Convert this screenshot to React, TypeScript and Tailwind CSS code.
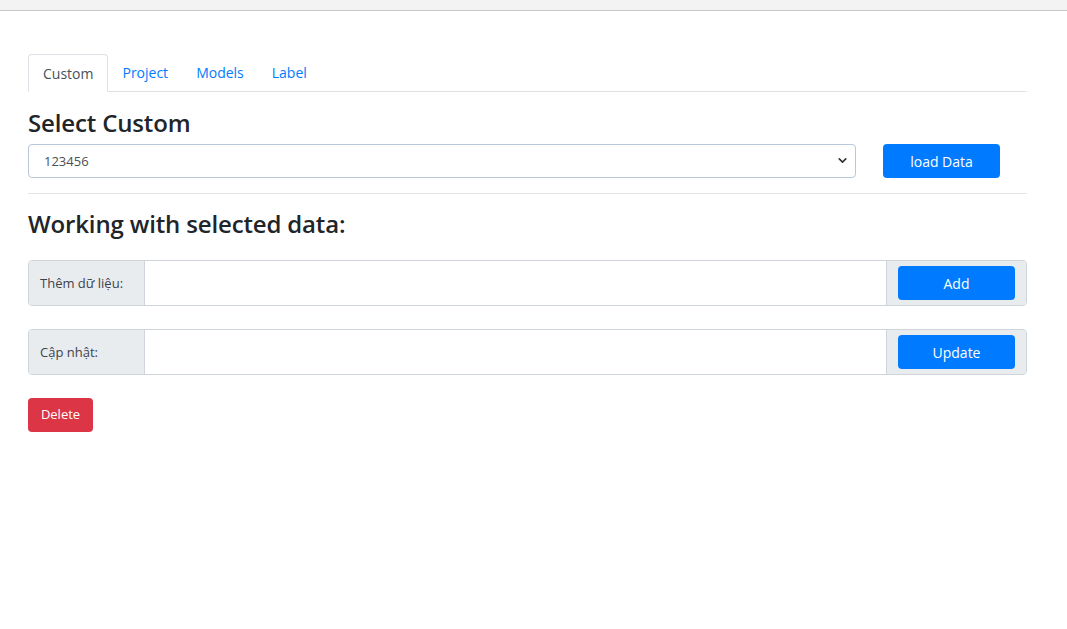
import { ChevronDown } from "lucide-react";

export default function App() {
    return (
        <div className="min-h-[629px] bg-white text-[#212529] [font-family:'Open_Sans',sans-serif]">
            {/* 상단 브라우저 띠 */}
            <div className="h-[11px] bg-[#f3f3f3] border-b border-[#c8c8c8]" />

            <div className="w-[999px] ml-[28px] pt-[43px]">
                {/* 탭 */}
                <div className="flex border-b border-[#dee2e6] h-[38px] text-[14px]">
                    <div className="px-[14px] h-[38px] flex items-center border border-[#dee2e6] border-b-white rounded-t-[4px] bg-white text-[#495057] -mb-px">
                        Custom
                    </div>
                    <div className="px-[14px] flex items-center text-[#007bff]">Project</div>
                    <div className="px-[14px] flex items-center text-[#007bff]">Models</div>
                    <div className="px-[14px] flex items-center text-[#007bff]">Label</div>
                </div>

                <h2 className="text-[24px] font-semibold tracking-[-0.15px] leading-[1.2] mt-[17px] mb-[6px]">Select Custom</h2>
                <div className="flex items-center">
                    <div className="w-[828px] h-[34px] border border-[#b8c7d9] rounded-[4px] flex items-center justify-between pl-[15px] pr-[6px] text-[13px] text-[#495057]">
                        <span className="pt-[2px]">123456</span>
                        <ChevronDown className="w-[13px] h-[13px] text-[#333]" strokeWidth={3} />
                    </div>
                    <button className="ml-[27px] w-[117px] h-[34px] pt-[1px] rounded-[4px] bg-[#007bff] text-white text-[14px]">
                        load Data
                    </button>
                </div>

                <div className="border-t border-[#e5e5e5] mt-[15px]" />

                <h2 className="text-[24px] font-semibold tracking-[-0.15px] leading-[1.2] mt-[16px] mb-[21px]">Working with selected data:</h2>

                <InputRow label="Thêm dữ liệu:" action="Add" />
                <div className="h-[23px]" />
                <InputRow label="Cập nhật:" action="Update" />

                <button className="mt-[23px] h-[34px] w-[65px] pt-[1px] rounded-[4px] bg-[#dc3545] text-white text-[13px]">
                    Delete
                </button>
            </div>
        </div>
    );
}

function InputRow({ label, action }: { label: string; action: string }) {
    return (
        <div className="flex h-[46px] border border-[#ced4da] rounded-[4px] overflow-hidden">
            <div className="w-[116px] bg-[#e9ecef] border-r border-[#ced4da] flex items-center pl-[11px] pt-[3px] text-[13px] text-[#3d4349]">
                {label}
            </div>
            <div className="flex-1 bg-white" />
            <div className="w-[140px] bg-[#e9ecef] border-l border-[#ced4da] flex items-center pl-[11px]">
                <button className="w-[117px] h-[34px] pt-[2px] rounded-[4px] bg-[#007bff] text-white text-[14px]">
                    {action}
                </button>
            </div>
        </div>
    );
}
